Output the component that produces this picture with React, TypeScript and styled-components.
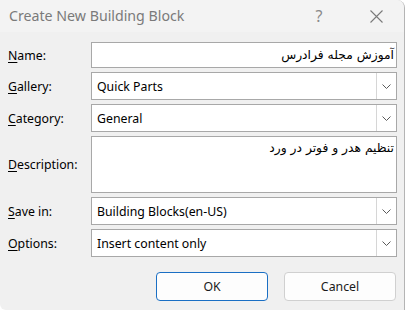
import React from "react";
import styled, { createGlobalStyle } from "styled-components";

const GlobalStyle = createGlobalStyle`
  html, body { margin: 0; padding: 0; background: #ffffff; }
  body { font-family: "Segoe UI", "Noto Sans", sans-serif; }
`;

const Window = styled.div`
  width: 405px;
  height: 310px;
  box-sizing: border-box;
  background: #f0f0f0;
  border-right: 1px solid #b4b4b4;
  border-top-right-radius: 8px;
  border-bottom-left-radius: 6px;
  overflow: hidden;
  display: flex;
  flex-direction: column;
`;

const TitleBar = styled.div`
  height: 32px;
  flex: none;
  background: #f3f3f3;
  display: flex;
  align-items: center;
  padding-left: 9px;
  padding-right: 5px;
  color: #7a7a7a;
  font-size: 14.2px;
`;

const Title = styled.div`
  flex: 1;
  margin-top: -2px;
`;

const TitleButton = styled.div<{ $w: number; $mr?: number }>`
  width: ${(p) => p.$w}px;
  margin-right: ${(p) => p.$mr ?? 0}px;
  display: flex;
  justify-content: center;
  align-items: center;
  color: #8a8a8a;
  font-size: 16px;
`;

const Form = styled.div`
  display: grid;
  grid-template-columns: 83px 306px;
  row-gap: 4px;
  padding: 10px 0 0 8px;
  font-size: 12.3px;
  color: #000;
`;

const Label = styled.div`
  display: flex;
  align-items: center;
  font-size: 12.3px;
  color: #000;
  u { text-underline-offset: 2px; }
`;

const Box = styled.div<{ $h: number }>`
  height: ${(p) => p.$h}px;
  box-sizing: border-box;
  border: 1px solid #a8a8a8;
  background: #fff;
  display: flex;
  align-items: center;
`;

const BoxText = styled.div`
  flex: 1;
  padding-left: 5px;
  white-space: nowrap;
  overflow: hidden;
`;

const RtlText = styled.div<{ $top?: boolean }>`
  flex: 1;
  align-self: ${(p) => (p.$top ? "flex-start" : "center")};
  direction: rtl;
  text-align: right;
  padding-right: 2px;
  padding-top: ${(p) => (p.$top ? "4px" : "0")};
  font-family: "DejaVu Sans", "Noto Sans", sans-serif;
  font-size: 12.3px;
`;

const DropButton = styled.div`
  width: 20px;
  align-self: stretch;
  box-sizing: border-box;
  border-left: 1px solid #d6d6d6;
  display: flex;
  align-items: center;
  justify-content: center;
`;

const Buttons = styled.div`
  display: flex;
  justify-content: flex-end;
  gap: 16px;
  padding: 15px 8px 0 0;
`;

const Button = styled.button<{ $primary?: boolean }>`
  width: 112px;
  height: 29px;
  box-sizing: border-box;
  border-radius: 4px;
  background: #fdfdfd;
  border: 1px solid ${(p) => (p.$primary ? "#1a6fc4" : "#d0d0d0")};
  font-family: "Segoe UI", "Noto Sans", sans-serif;
  font-size: 12.3px;
  color: #1a1a1a;
  padding: 0;
`;

const Chevron = () => (
  <svg width="9" height="5" viewBox="0 0 9 5">
    <path d="M0.5 0.5 L4.5 4.5 L8.5 0.5" fill="none" stroke="#5a5a5a" strokeWidth="1" />
  </svg>
);

const Combo = ({ text }: { text: string }) => (
  <Box $h={28}>
    <BoxText>{text}</BoxText>
    <DropButton>
      <Chevron />
    </DropButton>
  </Box>
);

export default function App() {
  return (
    <>
      <GlobalStyle />
      <Window>
        <TitleBar>
          <Title>Create New Building Block</Title>
          <TitleButton $w={24} $mr={22}>?</TitleButton>
          <TitleButton $w={46}>
            <svg width="13" height="13" viewBox="0 0 13 13">
              <path d="M0.5 0.5 L12.5 12.5 M12.5 0.5 L0.5 12.5" stroke="#7a7a7a" strokeWidth="1.1" />
            </svg>
          </TitleButton>
        </TitleBar>
        <Form>
          <Label>
            <span><u>N</u>ame:</span>
          </Label>
          <Box $h={26}>
            <RtlText>آموزش مجله فرادرس</RtlText>
          </Box>

          <Label>
            <span><u>G</u>allery:</span>
          </Label>
          <Combo text="Quick Parts" />

          <Label>
            <span><u>C</u>ategory:</span>
          </Label>
          <Combo text="General" />

          <Label>
            <span><u>D</u>escription:</span>
          </Label>
          <Box $h={57}>
            <RtlText $top>تنظیم هدر و فوتر در ورد</RtlText>
          </Box>

          <Label>
            <span><u>S</u>ave in:</span>
          </Label>
          <Combo text="Building Blocks(en-US)" />

          <Label>
            <span><u>O</u>ptions:</span>
          </Label>
          <Combo text="Insert content only" />
        </Form>
        <Buttons>
          <Button $primary>OK</Button>
          <Button>Cancel</Button>
        </Buttons>
      </Window>
    </>
  );
}
